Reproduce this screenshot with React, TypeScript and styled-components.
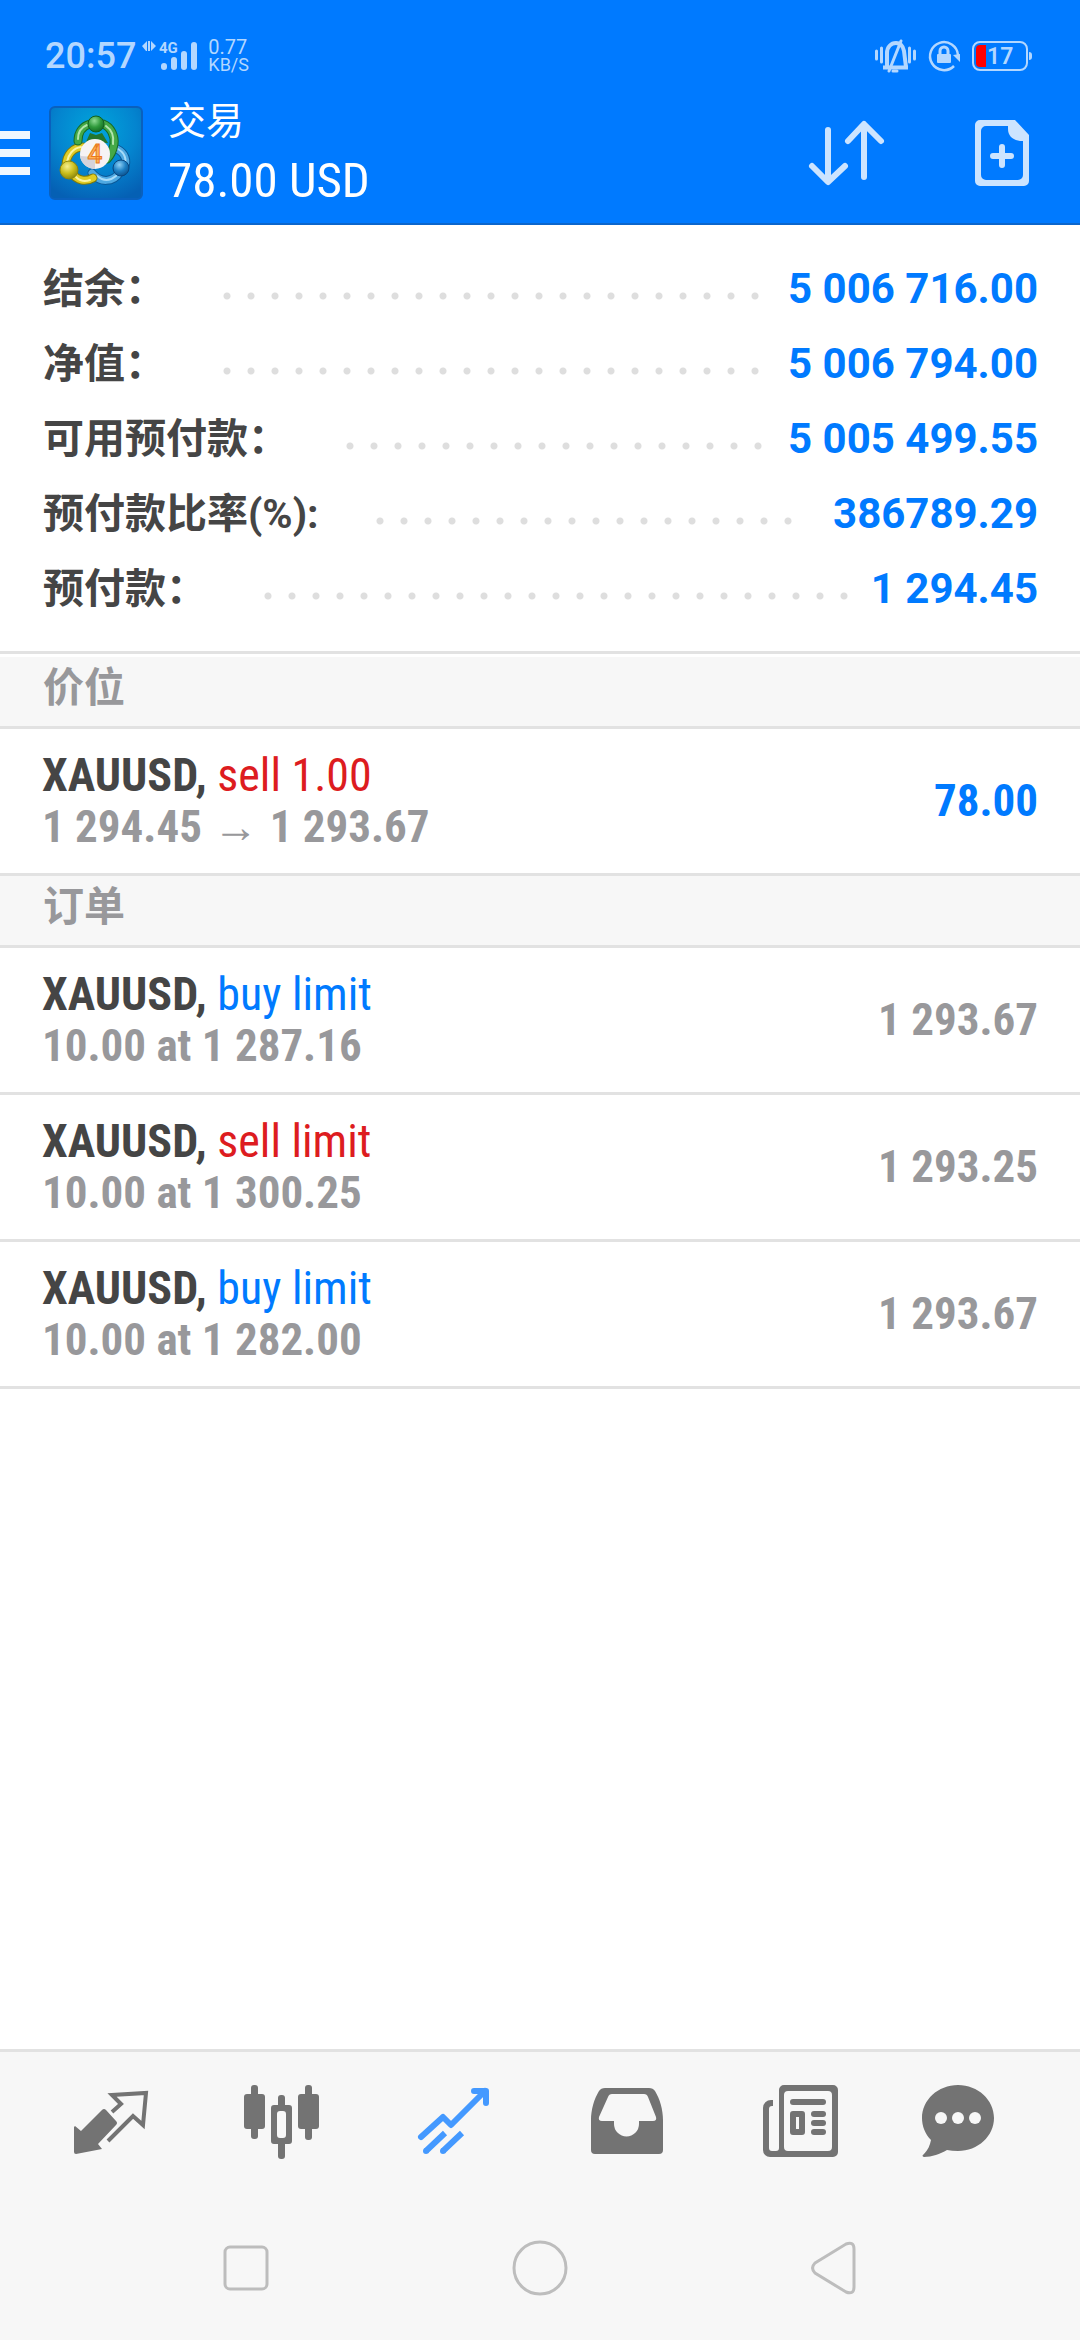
import React from "react";
import styled, { createGlobalStyle } from "styled-components";

const color = {
  brand: "#007aff",
  ink: "#454545",
  muted: "#98989b",
  sell: "#dd1c20",
  line: "#e2e2e2",
  panel: "#f7f7f7",
  icon: "#737373",
  active: "#4499ff",
  status: "#b3d7ff",
  action: "#cce4ff",
};

const GlobalStyle = createGlobalStyle`
  * { box-sizing: border-box; }
  body {
    margin: 0;
    background: #ffffff;
    font-family: Roboto, "Noto Sans CJK SC", sans-serif;
  }
  button {
    margin: 0;
    padding: 0;
    border: 0;
    background: none;
    color: inherit;
    font: inherit;
    cursor: pointer;
  }
  svg { display: block; overflow: visible; }
`;

const condensed = `"Roboto Condensed", "Liberation Sans Narrow", Roboto, "Noto Sans CJK SC", sans-serif`;

const Screen = styled.div`
  display: flex;
  flex-direction: column;
  min-height: 100vh;
`;

const TopBar = styled.header`
  display: flex;
  flex-direction: column;
  background: ${color.brand};
  border-bottom: 2px solid #0c66cc;
`;

const StatusBar = styled.div`
  display: flex;
  justify-content: space-between;
  align-items: flex-end;
  height: 78px;
  padding: 0 48px 6px 45px;
  color: ${color.status};
`;

const StatusGroup = styled.div`
  display: flex;
  align-items: center;
  height: 32px;
`;

const StatusIcons = styled(StatusGroup)`
  gap: 12px;
`;

const Clock = styled.span`
  margin-right: 6px;
  font-size: 36px;
  font-weight: 500;
  line-height: 36px;
`;

const Speed = styled.span`
  display: flex;
  flex-direction: column;
  margin-left: 10px;
  font-size: 20px;
  line-height: 17px;
`;

const SpeedUnit = styled.span`
  font-size: 18px;
`;

const AppBar = styled.div`
  display: flex;
  align-items: center;
  height: 145px;
  padding: 5px 51px 0 0;
`;

const MenuButton = styled.button`
  display: flex;
  flex-direction: column;
  gap: 10px;
  width: 30px;
  margin-right: 19px;
`;

const MenuLine = styled.span`
  height: 8px;
  background: #f0f7ff;
`;

const Heading = styled.div`
  display: flex;
  flex: 1;
  flex-direction: column;
  padding-left: 25px;
  color: #ffffff;
`;

const Title = styled.h1`
  margin: 0;
  font-size: 38px;
  font-weight: 400;
  line-height: 56px;
`;

const Profit = styled.span`
  font-family: ${condensed};
  font-size: 49px;
  line-height: 64px;
`;

const Actions = styled.div`
  display: flex;
  gap: 90px;
`;

const Summary = styled.dl`
  margin: 0;
  padding: 26px 42px 25px 43px;
`;

const SummaryRow = styled.div`
  display: flex;
  align-items: center;
  height: 75px;
`;

const SummaryLabel = styled.dt`
  color: ${color.ink};
  font-size: 41px;
  font-weight: 700;
  line-height: 60px;
`;

/* One line of dots; those that do not fit wrap below and are hidden. */
const LeaderLine = styled.span`
  display: flex;
  flex: 1;
  flex-wrap: wrap;
  height: 8px;
  margin: 14px 22px 0 41px;
  overflow: hidden;
`;

const Dot = styled.span`
  width: 24px;
  height: 8px;
  background: radial-gradient(circle at 20px 4px, #dedede 3px, transparent 4px);
`;

const SummaryValue = styled.dd`
  margin: 0;
  color: ${color.brand};
  font-size: 42px;
  font-weight: 700;
`;

const Section = styled.section`
  border-top: 3px solid ${color.line};

  & + & {
    border-top: 0;
  }
`;

const SectionTitle = styled.h2<{ $inset?: boolean }>`
  height: ${(p) => (p.$inset ? 75 : 72)}px;
  margin: 0;
  padding: 0 43px;
  border-top: ${(p) => (p.$inset ? 3 : 0)}px solid #ffffff;
  border-bottom: 3px solid ${color.line};
  background: ${color.panel};
  color: ${color.muted};
  font-size: 41px;
  font-weight: 700;
  line-height: 62px;
`;

const TradeList = styled.ul`
  margin: 0;
  padding: 0;
  list-style: none;
`;

const TradeRow = styled.li`
  display: flex;
  align-items: center;
  justify-content: space-between;
  height: 147px;
  padding: 0 42px;
  border-bottom: 3px solid ${color.line};
  font-family: ${condensed};
  font-size: 45px;
  font-weight: 700;
  line-height: 52px;
`;

const TradeText = styled.div`
  display: flex;
  flex-direction: column;
  color: ${color.ink};
`;

const Instrument = styled.span`
  font-size: 46px;
`;

const Side = styled.span<{ $tone: "buy" | "sell" }>`
  color: ${(p) => (p.$tone === "buy" ? color.brand : color.sell)};
  font-weight: 400;
`;

const Detail = styled.span`
  color: ${color.muted};
`;

const Arrow = styled.span`
  margin: 0 1px;
  font-family: "Liberation Sans", sans-serif;
  font-weight: 400;
  line-height: 34px;
`;

const Price = styled.span<{ $profit?: boolean }>`
  color: ${(p) => (p.$profit ? color.brand : color.muted)};
`;

const Main = styled.main`
  flex: 1;
`;

const Footer = styled.footer`
  border-top: 3px solid ${color.line};
  background: ${color.panel};
`;

const TabBar = styled.nav`
  display: grid;
  grid-template-columns: repeat(6, 1fr);
  height: 144px;
  padding: 0 24px;
`;

const Tab = styled.button<{ $active?: boolean }>`
  display: flex;
  align-items: center;
  justify-content: center;
  color: ${(p) => (p.$active ? color.active : color.icon)};
`;

const SystemBar = styled.div`
  display: grid;
  grid-template-columns: repeat(3, 1fr);
  height: 144px;
  padding: 0 99px;
  color: #bdbdbd;
`;

const SystemButton = styled.button`
  display: flex;
  align-items: center;
  justify-content: center;
`;

const SignalIcon = () => (
  <svg width="56" height="32" viewBox="0 0 56 32" fill="currentColor">
    <path d="M0 6l5-5v10H4zM6 1h2v10H6zM9 1l5 5-5 5z" />
    <text x="17" y="13" fontFamily="Roboto, sans-serif" fontSize="15" fontWeight="700">
      4G
    </text>
    <rect x="19" y="23" width="6" height="7" rx="3" />
    <rect x="29" y="17" width="6" height="13" rx="3" />
    <rect x="39" y="11" width="6" height="19" rx="3" />
    <rect x="49" y="2" width="6" height="28" rx="3" />
  </svg>
);

const MutedBellIcon = () => (
  <svg width="41" height="32" viewBox="0 0 41 32" fill="none" stroke="currentColor" strokeWidth="3" strokeLinecap="round">
    <path d="M1.5 11v8M6.5 8v14M34.500 8v14M39.500 11v8" />
    <path d="M8 27.500h25M12 26V13c0-6 4-10 9-10 4 0 7 3 8 8l2 16" strokeWidth="4" strokeLinecap="butt" />
    <path d="M26 1L14 31M18 31h4" />
  </svg>
);

const RotationLockIcon = () => (
  <svg width="32" height="32" viewBox="0 0 32 32" fill="none" stroke="currentColor">
    <path d="M30 15A14 14 0 1 0 26 26" strokeWidth="2.500" />
    <path d="M25 15l7-1v8z" fill="currentColor" stroke="none" />
    <rect x="9" y="14" width="14" height="9" rx="1" fill="currentColor" stroke="none" />
    <path d="M12 14v-3a4 4 0 0 1 8 0v3" strokeWidth="3" />
  </svg>
);

const BatteryIcon = () => (
  <svg width="60" height="32" viewBox="0 0 60 32">
    <rect x="1" y="2" width="54" height="28" rx="7" fill="none" stroke="currentColor" strokeWidth="2" />
    <path d="M57 12v8a3 3 0 0 0 3-3v-2a3 3 0 0 0-3-3z" fill="currentColor" />
    <path d="M8 5h6v22H8a4 4 0 0 1-4-4V9a4 4 0 0 1 4-4z" fill="#ff0000" />
    <text x="15" y="24" fill="currentColor" fontFamily="Roboto, sans-serif" fontSize="23" fontWeight="600">
      17
    </text>
  </svg>
);

const Logo = () => (
  <svg width="94" height="94" viewBox="-1 -1 94 94" role="img" aria-label="MetaTrader 4">
    <defs>
      <radialGradient id="tile" cx="0.5" cy="0.25" r="0.8">
        <stop offset="0" stopColor="#00a6dc" />
        <stop offset="0.55" stopColor="#0484cf" />
        <stop offset="1" stopColor="#0560b4" />
      </radialGradient>
      <radialGradient id="greenBall" cx="0.4" cy="0.3" r="0.8">
        <stop offset="0" stopColor="#8fdc94" />
        <stop offset="0.5" stopColor="#2f9a3c" />
        <stop offset="1" stopColor="#0d5f1c" />
      </radialGradient>
      <radialGradient id="yellowBall" cx="0.4" cy="0.3" r="0.8">
        <stop offset="0" stopColor="#f6ef8e" />
        <stop offset="0.5" stopColor="#c9bd1c" />
        <stop offset="1" stopColor="#7d7a0c" />
      </radialGradient>
      <radialGradient id="blueBall" cx="0.4" cy="0.3" r="0.8">
        <stop offset="0" stopColor="#8fd0f5" />
        <stop offset="0.5" stopColor="#1d7fc4" />
        <stop offset="1" stopColor="#0a4780" />
      </radialGradient>
    </defs>
    <rect width="92" height="92" rx="5" fill="url(#tile)" stroke="#0a60bd" strokeWidth="2" />
    <g fill="none" strokeLinecap="round">
      <path d="M67 42c8 4 11 12 7 19M70 65c-7 11-20 11-28 1" stroke="#0b5796" strokeWidth="9" />
      <path d="M67 42c8 4 11 12 7 19M70 65c-7 11-20 11-28 1" stroke="#4fa9e2" strokeWidth="7" />
      <path d="M68 42c7 4 9 11 6 16M66 69c-6 5-13 5-19 0" stroke="#a9dbf8" strokeWidth="2" />
      <path d="M33 40c-10 0-17 8-17 19M22 66c5 8 14 9 21 5" stroke="#7d7a0c" strokeWidth="9" />
      <path d="M33 40c-10 0-17 8-17 19M22 66c5 8 14 9 21 5" stroke="#dfcb25" strokeWidth="7" />
      <path d="M31 40c-8 1-13 8-14 15M26 70c4 4 9 5 14 3" stroke="#faf3a0" strokeWidth="2" />
      <path d="M28 34c0-9 5-15 12-17M53 17c8 3 12 12 11 20-1 6-3 11-7 15" stroke="#176b25" strokeWidth="9" />
      <path d="M28 34c0-9 5-15 12-17M53 17c8 3 12 12 11 20-1 6-3 11-7 15" stroke="#45a947" strokeWidth="7" />
      <path d="M28 32c0-7 4-12 9-14M56 19c6 4 8 11 7 18" stroke="#b1e5ac" strokeWidth="2" />
    </g>
    <path d="M36 35l4-9 6 2 6-2 6 10z" fill="#23762d" />
    <circle cx="46" cy="17" r="8" fill="url(#greenBall)" stroke="#12601f" strokeWidth="1" />
    <circle cx="19" cy="63" r="9" fill="url(#yellowBall)" stroke="#8c860f" strokeWidth="1" />
    <circle cx="71" cy="61" r="8" fill="url(#blueBall)" stroke="#0a4780" strokeWidth="1" />
    <circle cx="45" cy="47" r="15" fill="#f6f3f4" />
    <path d="M30 49a15 15 0 0 0 15 13V50z" fill="#d6d3da" />
    <text
      x="45"
      y="56"
      textAnchor="middle"
      fontFamily="Roboto, sans-serif"
      fontSize="26"
      fontWeight="500"
      fill="#ffb45c"
      stroke="#ea7a1c"
      strokeWidth="1"
    >
      4
    </text>
  </svg>
);

const SortIcon = () => (
  <svg width="75" height="66" viewBox="0 0 75 66" fill="none" stroke={color.action} strokeWidth="6" strokeLinecap="round" strokeLinejoin="round">
    <path d="M18 10v51M2 46l16 16 17-16" />
    <path d="M54 57V5M38 21L54 4l17 17" />
  </svg>
);

const NewOrderIcon = () => (
  <svg width="54" height="66" viewBox="0 0 54 66" fill={color.action}>
    <path
      fillRule="evenodd"
      d="M5 0h35l14 15v46a5 5 0 0 1-5 5H5a5 5 0 0 1-5-5V5a5 5 0 0 1 5-5zM11 6a5 5 0 0 0-5 5v44a5 5 0 0 0 5 5h32a5 5 0 0 0 5-5V21h-3C38 20 33 16 33 9V6z"
    />
    <path d="M27 27v18M18 36h18" stroke={color.action} strokeWidth="6" strokeLinecap="round" />
  </svg>
);

const TabIcon = ({ children }: { children: React.ReactNode }) => (
  <svg width="96" height="96" viewBox="0 0 96 96" fill="currentColor">
    {children}
  </svg>
);

const QuotesIcon = () => (
  <TabIcon>
    <path d="M13 50l6 5 21-21q2-2 4 0l10 11q2 2 0 4L36 68l4 5-26 5q-2 0-2-2V51z" />
    <path d="M50 36l9-8-9-9 34-2-3 32-10-9-25 25" fill="none" stroke="currentColor" strokeWidth="4" />
  </TabIcon>
);

const ChartIcon = () => (
  <TabIcon>
    <rect x="17" y="9" width="7" height="54" rx="3" />
    <rect x="10" y="18" width="21" height="35" rx="3" />
    <rect x="71" y="9" width="7" height="55" rx="3" />
    <rect x="64" y="18" width="21" height="35" rx="3" />
    <rect x="44" y="19" width="7" height="14" rx="3" />
    <rect x="44" y="64" width="7" height="19" rx="3" />
    <path
      fillRule="evenodd"
      d="M40 29h15a3 3 0 0 1 3 3v33a3 3 0 0 1-3 3H40a3 3 0 0 1-3-3V32a3 3 0 0 1 3-3zM46 35a3 3 0 0 0-3 3v21a3 3 0 0 0 3 3h3a3 3 0 0 0 3-3V38a3 3 0 0 0-3-3z"
    />
  </TabIcon>
);

const TradeIcon = () => (
  <TabIcon>
    <g fill="none" stroke="currentColor" strokeWidth="6" strokeLinejoin="round">
      <path d="M15 61l22-20 8 8 34-34" strokeLinecap="round" />
      <path d="M68 15h12v12" strokeLinecap="round" />
      <path d="M20 75l19-18M37 75l19-18" />
    </g>
    <circle cx="20" cy="75" r="3" />
    <circle cx="37" cy="75" r="3" />
  </TabIcon>
);

const HistoryIcon = () => (
  <TabIcon>
    <path
      fillRule="evenodd"
      d="M27 12h44q4 0 6 3c5 8 8 19 8 29v30q0 4-4 4H17q-4 0-4-4V44c0-10 3-21 8-29q2-3 6-3zM34 18q-3 0-4 3l-9 20q-1 4 3 4h12v3a12 12 0 0 0 25 0v-3h14q4 0 3-4l-8-20q-1-3-4-3z"
    />
  </TabIcon>
);

const NewsIcon = () => (
  <TabIcon>
    <path
      fillRule="evenodd"
      d="M34 9h49a5 5 0 0 1 5 5v62a5 5 0 0 1-5 5H20a7 7 0 0 1-7-7V32a8 8 0 0 1 8-8h2v6h-1q-3 0-3 3v39q0 3 3 3h4q3 0 3-3V14a5 5 0 0 1 5-5zM38 15a4 4 0 0 0-4 4v52a4 4 0 0 0 4 4h40a4 4 0 0 0 4-4V19a4 4 0 0 0-4-4z"
    />
    <rect x="40" y="23" width="36" height="6" rx="3" />
    <path fillRule="evenodd" d="M43 35h9a3 3 0 0 1 3 3v18a3 3 0 0 1-3 3h-9a3 3 0 0 1-3-3V38a3 3 0 0 1 3-3zM46 41v12h3V41z" />
    <rect x="61" y="35" width="15" height="6" rx="3" />
    <rect x="61" y="44" width="15" height="6" rx="3" />
    <rect x="61" y="53" width="15" height="6" rx="3" />
  </TabIcon>
);

const MessagesIcon = () => (
  <TabIcon>
    <path d="M36 9c20 0 36 15 36 33S56 75 36 75q-6 0-11-1C18 78 10 81 2 81q-3-1 0-3c4-4 6-9 7-14C3 58 0 50 0 42 0 24 16 9 36 9z" />
    <g fill={color.panel}>
      <circle cx="19" cy="42" r="6" />
      <circle cx="36" cy="42" r="6" />
      <circle cx="53" cy="42" r="6" />
    </g>
  </TabIcon>
);

const Leader = () => (
  <LeaderLine aria-hidden="true">
    {Array.from({ length: 40 }, (_, i) => (
      <Dot key={i} />
    ))}
  </LeaderLine>
);

const summary = [
  { label: "结余：", value: "5 006 716.00" },
  { label: "净值：", value: "5 006 794.00" },
  { label: "可用预付款：", value: "5 005 499.55" },
  { label: "预付款比率(%):", value: "386789.29" },
  { label: "预付款：", value: "1 294.45" },
];

type Trade = {
  symbol: string;
  tone: "buy" | "sell";
  side: string;
  detail: React.ReactNode;
  price: string;
  profit?: boolean;
};

const positions: Trade[] = [
  {
    symbol: "XAUUSD",
    tone: "sell",
    side: "sell 1.00",
    detail: (
      <>
        1 294.45 <Arrow>→</Arrow> 1 293.67
      </>
    ),
    price: "78.00",
    profit: true,
  },
];

const orders: Trade[] = [
  { symbol: "XAUUSD", tone: "buy", side: "buy limit", detail: "10.00 at 1 287.16", price: "1 293.67" },
  { symbol: "XAUUSD", tone: "sell", side: "sell limit", detail: "10.00 at 1 300.25", price: "1 293.25" },
  { symbol: "XAUUSD", tone: "buy", side: "buy limit", detail: "10.00 at 1 282.00", price: "1 293.67" },
];

const tabs = [
  { name: "行情", Icon: QuotesIcon },
  { name: "图表", Icon: ChartIcon },
  { name: "交易", Icon: TradeIcon, active: true },
  { name: "历史", Icon: HistoryIcon },
  { name: "新闻", Icon: NewsIcon },
  { name: "信息", Icon: MessagesIcon },
];

const Trades = ({ items }: { items: Trade[] }) => (
  <TradeList>
    {items.map((t, i) => (
      <TradeRow key={i}>
        <TradeText>
          <Instrument>
            {t.symbol}, <Side $tone={t.tone}>{t.side}</Side>
          </Instrument>
          <Detail>{t.detail}</Detail>
        </TradeText>
        <Price $profit={t.profit}>{t.price}</Price>
      </TradeRow>
    ))}
  </TradeList>
);

export default function App() {
  return (
    <Screen>
      <GlobalStyle />
      <TopBar>
        <StatusBar>
          <StatusGroup>
            <Clock>20:57</Clock>
            <SignalIcon />
            <Speed>
              <span>0.77</span>
              <SpeedUnit>KB/S</SpeedUnit>
            </Speed>
          </StatusGroup>
          <StatusIcons>
            <MutedBellIcon />
            <RotationLockIcon />
            <BatteryIcon />
          </StatusIcons>
        </StatusBar>
        <AppBar>
          <MenuButton aria-label="菜单">
            <MenuLine />
            <MenuLine />
            <MenuLine />
          </MenuButton>
          <Logo />
          <Heading>
            <Title>交易</Title>
            <Profit>78.00 USD</Profit>
          </Heading>
          <Actions>
            <button aria-label="排序">
              <SortIcon />
            </button>
            <button aria-label="新订单">
              <NewOrderIcon />
            </button>
          </Actions>
        </AppBar>
      </TopBar>
      <Main>
        <Summary>
          {summary.map((row) => (
            <SummaryRow key={row.label}>
              <SummaryLabel>{row.label}</SummaryLabel>
              <Leader />
              <SummaryValue>{row.value}</SummaryValue>
            </SummaryRow>
          ))}
        </Summary>
        <Section>
          <SectionTitle $inset>价位</SectionTitle>
          <Trades items={positions} />
        </Section>
        <Section>
          <SectionTitle>订单</SectionTitle>
          <Trades items={orders} />
        </Section>
      </Main>
      <Footer>
        <TabBar>
          {tabs.map(({ name, Icon, active }) => (
            <Tab key={name} aria-label={name} $active={active}>
              <Icon />
            </Tab>
          ))}
        </TabBar>
        <SystemBar>
          <SystemButton aria-label="最近任务">
            <svg width="54" height="54" viewBox="0 0 54 54" fill="none" stroke="currentColor" strokeWidth="3">
              <rect x="6" y="6" width="42" height="42" rx="5" />
            </svg>
          </SystemButton>
          <SystemButton aria-label="主屏幕">
            <svg width="54" height="54" viewBox="0 0 54 54" fill="none" stroke="currentColor" strokeWidth="3">
              <circle cx="27" cy="27" r="26" />
            </svg>
          </SystemButton>
          <SystemButton aria-label="返回">
            <svg width="54" height="54" viewBox="0 0 54 54" fill="none" stroke="currentColor" strokeWidth="3">
              <path d="M8 22L39 3q8-3 8 5v38q0 8-8 5L8 32q-5-5 0-10z" />
            </svg>
          </SystemButton>
        </SystemBar>
      </Footer>
    </Screen>
  );
}
